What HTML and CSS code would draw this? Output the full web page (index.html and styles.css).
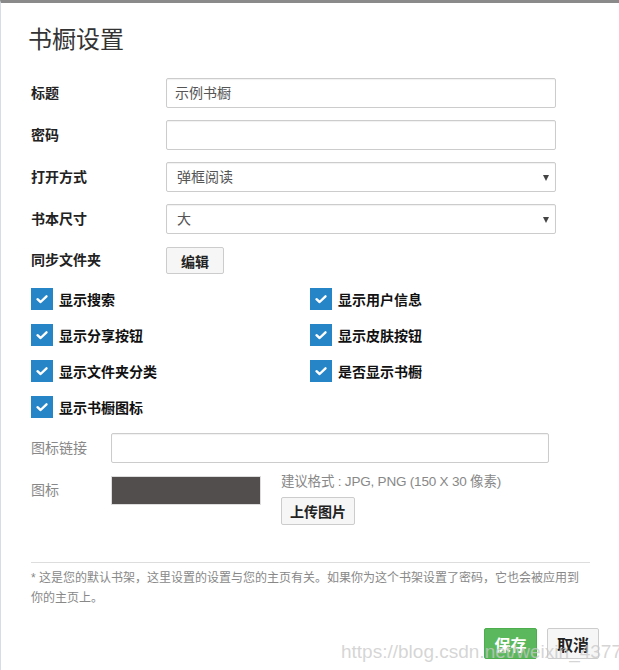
FILE: index.html
```html
<!DOCTYPE html>
<html lang="zh">
<head>
<meta charset="utf-8">
<title>书橱设置</title>
<link rel="stylesheet" href="styles.css">
</head>
<body>
<div class="modal">
  <h1 class="title">书橱设置</h1>
  <div class="form">
    <label class="lbl">标题</label>
    <div class="field">示例书橱</div>
    <label class="lbl">密码</label>
    <div class="field"></div>
    <label class="lbl">打开方式</label>
    <div class="field select">弹框阅读<span class="caret"></span></div>
    <label class="lbl">书本尺寸</label>
    <div class="field select">大<span class="caret"></span></div>
    <label class="lbl">同步文件夹</label>
    <div><button class="btn btn-edit">编辑</button></div>
  </div>
  <div class="checks">
    <div class="check"><span class="box"><svg viewBox="0 0 22 22" width="22" height="22"><path d="M6.5 11.2 L9.6 14 L15.5 8.3" fill="none" stroke="#fff" stroke-width="2.4" stroke-linecap="round" stroke-linejoin="round"/></svg></span>显示搜索</div>
    <div class="check"><span class="box"><svg viewBox="0 0 22 22" width="22" height="22"><path d="M6.5 11.2 L9.6 14 L15.5 8.3" fill="none" stroke="#fff" stroke-width="2.4" stroke-linecap="round" stroke-linejoin="round"/></svg></span>显示用户信息</div>
    <div class="check"><span class="box"><svg viewBox="0 0 22 22" width="22" height="22"><path d="M6.5 11.2 L9.6 14 L15.5 8.3" fill="none" stroke="#fff" stroke-width="2.4" stroke-linecap="round" stroke-linejoin="round"/></svg></span>显示分享按钮</div>
    <div class="check"><span class="box"><svg viewBox="0 0 22 22" width="22" height="22"><path d="M6.5 11.2 L9.6 14 L15.5 8.3" fill="none" stroke="#fff" stroke-width="2.4" stroke-linecap="round" stroke-linejoin="round"/></svg></span>显示皮肤按钮</div>
    <div class="check"><span class="box"><svg viewBox="0 0 22 22" width="22" height="22"><path d="M6.5 11.2 L9.6 14 L15.5 8.3" fill="none" stroke="#fff" stroke-width="2.4" stroke-linecap="round" stroke-linejoin="round"/></svg></span>显示文件夹分类</div>
    <div class="check"><span class="box"><svg viewBox="0 0 22 22" width="22" height="22"><path d="M6.5 11.2 L9.6 14 L15.5 8.3" fill="none" stroke="#fff" stroke-width="2.4" stroke-linecap="round" stroke-linejoin="round"/></svg></span>是否显示书橱</div>
    <div class="check"><span class="box"><svg viewBox="0 0 22 22" width="22" height="22"><path d="M6.5 11.2 L9.6 14 L15.5 8.3" fill="none" stroke="#fff" stroke-width="2.4" stroke-linecap="round" stroke-linejoin="round"/></svg></span>显示书橱图标</div>
  </div>
  <div class="icon-form">
    <label class="lbl2">图标链接</label>
    <div class="field field-link"></div>
    <label class="lbl2 lbl-icon">图标</label>
    <div class="icon-row">
      <div class="preview"></div>
      <div class="upload">
        <div class="hint">建议格式 : JPG, PNG (150 X 30 像素)</div>
        <button class="btn btn-upload">上传图片</button>
      </div>
    </div>
  </div>
  <hr class="rule">
  <p class="note">* 这是您的默认书架，这里设置的设置与您的主页有关。如果你为这个书架设置了密码，它也会被应用到你的主页上。</p>
  <div class="actions">
    <button class="btn btn-save">保存</button>
    <button class="btn btn-cancel">取消</button>
  </div>
  <div class="watermark">https://blog.csdn.net/weixin_43770771</div>
</div>
</body>
</html>
```
FILE: styles.css
```css
html, body {
  margin: 0;
  padding: 0;
  background: #fff;
}
body {
  font-family: "Liberation Sans", "Noto Sans CJK SC", sans-serif;
  color: #333;
  font-size: 14px;
}
.modal {
  position: relative;
  box-sizing: border-box;
  width: 619px;
  height: 670px;
  border-top: 3px solid #8a8a8a;
  border-left: 1px solid #d6dde6;
  padding: 0 30px 0 30px;
  overflow: hidden;
}
.title {
  margin: 21px 0 0 -3px;
  font-size: 24px;
  font-weight: normal;
  line-height: 32px;
  color: #333;
  height: 32px;
}
.form {
  margin-top: 22px;
  display: grid;
  grid-template-columns: 135px 390px;
  row-gap: 12px;
  align-items: center;
}
.lbl {
  font-weight: bold;
  font-size: 14px;
  color: #222;
  line-height: 20px;
}
.field {
  box-sizing: border-box;
  height: 30px;
  border: 1px solid #ccc;
  border-radius: 2px;
  box-shadow: inset 0 1px 1px rgba(0,0,0,0.06);
  padding: 0 10px 0 8px;
  line-height: 28px;
  color: #555;
  font-size: 14px;
  position: relative;
}
.select {
  padding-left: 10px;
}
.caret {
  position: absolute;
  right: 6px;
  top: 12px;
  width: 0;
  height: 0;
  border-left: 3.5px solid transparent;
  border-right: 3.5px solid transparent;
  border-top: 6px solid #444;
}
.btn {
  font-family: "Liberation Sans", "Noto Sans CJK SC", sans-serif;
  font-weight: bold;
  box-sizing: border-box;
  border: 1px solid #ccc;
  border-radius: 2px;
  background: #f6f6f6;
  color: #222;
  padding: 0;
  cursor: pointer;
}
.btn-edit {
  width: 58px;
  height: 27px;
  font-size: 14px;
  margin-top: 1px;
}
.checks {
  margin-top: 14px;
  display: grid;
  grid-template-columns: 279px 279px;
  row-gap: 14px;
}
.check {
  display: flex;
  align-items: center;
  height: 22px;
  font-weight: bold;
  font-size: 14px;
  color: #111;
}
.box {
  width: 22px;
  height: 22px;
  background: #2585c7;
  margin-right: 6px;
  display: block;
}
.box svg { display: block; }
.icon-form {
  margin-top: 15px;
  display: grid;
  grid-template-columns: 80px 438px;
  row-gap: 13px;
  align-items: start;
}
.lbl2 {
  color: #888;
  font-size: 14px;
  line-height: 30px;
}
.lbl-icon {
  line-height: 28px;
}
.field-link {
  width: 438px;
}
.icon-row {
  display: flex;
  gap: 20px;
}
.preview {
  width: 150px;
  height: 29px;
  background: #524e4d;
  border: 1px solid #ddd;
  box-sizing: border-box;
}
.upload {
  display: flex;
  flex-direction: column;
  align-items: flex-start;
}
.hint {
  color: #888;
  font-size: 13.5px;
  line-height: 16px;
  margin-top: -2px;
  letter-spacing: -0.2px;
}
.btn-upload {
  margin-top: 7px;
  width: 74px;
  height: 28px;
  font-size: 14px;
}
.rule {
  margin: 37px 0 0 0;
  border: 0;
  border-top: 1px solid #ddd;
  width: 559px;
}
.note {
  margin: 5px 0 0 0;
  font-size: 12px;
  line-height: 20px;
  color: #888;
  width: 552px;
}
.actions {
  position: absolute;
  right: 20px;
  top: 625px;
  display: flex;
  gap: 10px;
}
.btn-save {
  width: 53px;
  height: 31px;
  background: #5cb85c;
  border-color: #4cae4c;
  color: #fff;
  font-size: 16px;
}
.btn-cancel {
  width: 52px;
  height: 31px;
  font-size: 16px;
  background: #f6f6f6;
}
.watermark {
  position: absolute;
  left: 340px;
  top: 638px;
  font-family: "Liberation Sans", sans-serif;
  font-size: 19px;
  color: rgba(200,200,200,0.75);
  white-space: nowrap;
  pointer-events: none;
}
```
